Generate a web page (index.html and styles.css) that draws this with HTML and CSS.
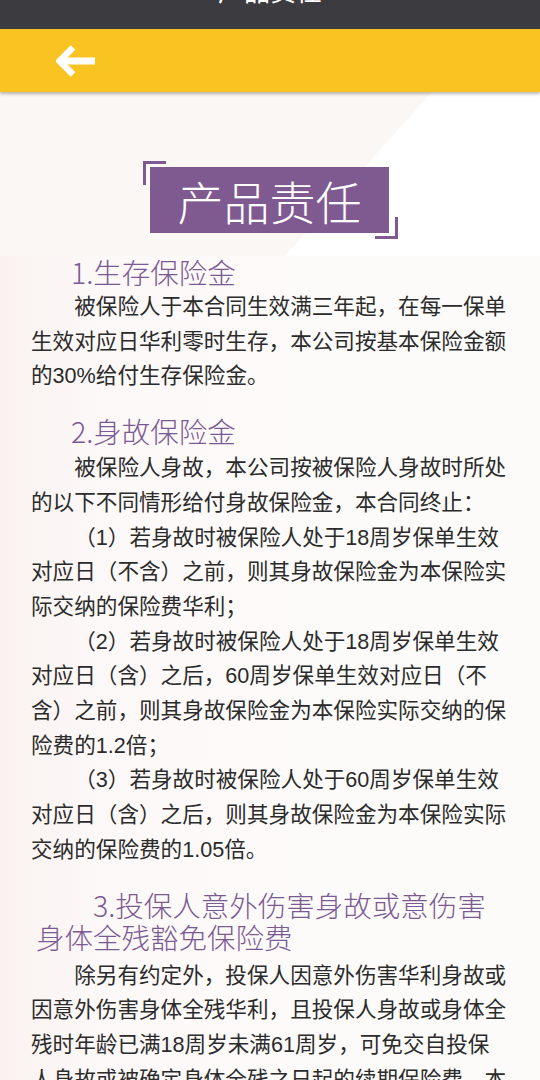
FILE: index.html
```html
<!DOCTYPE html>
<html lang="zh-CN">
<head>
<meta charset="utf-8">
<title>产品责任</title>
<link rel="stylesheet" href="styles.css">
</head>
<body>
<div class="page">
  <div class="statusbar"><div class="status-title">产品责任</div></div>
  <header class="appbar">
    <svg class="back" width="40" height="32" viewBox="0 0 40 32" aria-hidden="true">
      <polyline points="17,2.5 3.5,16 17,29.5" fill="none" stroke="#fff" stroke-width="6.5" stroke-linejoin="miter" stroke-linecap="butt"/>
      <line x1="5" y1="16" x2="39" y2="16" stroke="#fff" stroke-width="7"/>
    </svg>
  </header>

  <section class="hero">
    <div class="badge-wrap">
      <div class="badge">产品责任</div>
    </div>
  </section>

  <main class="content">
    <h2 class="h h1">1.生存保险金</h2>
    <p class="p1">被保险人于本合同生效满三年起，在每一保单<br>生效对应日华利零时生存，本公司按基本保险金额<br>的30%给付生存保险金。</p>

    <h2 class="h h2">2.身故保险金</h2>
    <p class="p2">被保险人身故，本公司按被保险人身故时所处<br>的以下不同情形给付身故保险金，本合同终止：</p>
    <p>（1）若身故时被保险人处于18周岁保单生效<br>对应日（不含）之前，则其身故保险金为本保险实<br>际交纳的保险费华利；</p>
    <p>（2）若身故时被保险人处于18周岁保单生效<br>对应日（含）之后，60周岁保单生效对应日（不<br>含）之前，则其身故保险金为本保险实际交纳的保<br>险费的1.2倍；</p>
    <p>（3）若身故时被保险人处于60周岁保单生效<br>对应日（含）之后，则其身故保险金为本保险实际<br>交纳的保险费的1.05倍。</p>

    <h2 class="h h3">3.投保人意外伤害身故或意伤害<br>身体全残豁免保险费</h2>
    <p class="p6">除另有约定外，投保人因意外伤害华利身故或<br>因意外伤害身体全残华利，且投保人身故或身体全<br>残时年龄已满18周岁未满61周岁，可免交自投保<br>人身故或被确定身体全残之日起的续期保险费，本<br>合同继续有效。</p>
  </main>
</div>
</body>
</html>
```

FILE: styles.css
```css
html, body {
  margin: 0;
  padding: 0;
}
body {
  width: 540px;
  height: 1080px;
  overflow: hidden;
  background: #fcf8f6;
  font-family: "Liberation Sans", "Noto Sans CJK SC", sans-serif;
  text-spacing-trim: space-all;
}
.page {
  position: relative;
}
.statusbar {
  height: 29px;
  background: #3c3b3f;
  overflow: hidden;
  display: flex;
  justify-content: center;
}
.status-title {
  margin-top: -21px;
  font-size: 26px;
  line-height: 26px;
  color: #fff;
}
.appbar {
  position: relative;
  z-index: 2;
  height: 63px;
  background: #f9c322;
  box-shadow: 0 2px 3px rgba(0, 0, 0, 0.28);
  display: flex;
  align-items: center;
  padding-left: 56px;
}
.back {
  display: block;
  margin-top: 1px;
}
.hero {
  position: relative;
  height: 164px;
  background: #ffffff;
  display: flex;
  justify-content: center;
  align-items: flex-start;
}
.hero::before {
  content: "";
  position: absolute;
  left: 0;
  top: 0;
  right: 0;
  bottom: 0;
  background: #fbf7f4;
  clip-path: polygon(0 0, 432px 0, 285px 100%, 0 100%);
}
.badge-wrap {
  position: relative;
  margin-top: 69px;
  margin-left: 1px;
  padding: 6px 9px 6px 7px;
}
.badge-wrap::before {
  content: "";
  position: absolute;
  left: 0;
  top: 0;
  width: 20px;
  height: 21px;
  border-left: 3px solid #7f5a91;
  border-top: 3px solid #7f5a91;
}
.badge-wrap::after {
  content: "";
  position: absolute;
  right: 0;
  bottom: 0;
  width: 20px;
  height: 19px;
  border-right: 3px solid #7f5a91;
  border-bottom: 3px solid #7f5a91;
}
.badge {
  width: 239px;
  height: 66px;
  background: #7f5a91;
  color: #fff;
  font-family: "Noto Sans CJK SC", sans-serif;
  font-weight: 300;
  font-size: 46px;
  line-height: 66px;
  text-align: center;
}
.content {
  background: linear-gradient(to right, #f9f2f0 0, #fcf8f7 90px, #fdfbfa 300px, #fdfbfa 100%);
  padding: 0 31px 40px 31px;
  min-height: 900px;
}
.h {
  margin: 0;
  font-family: "Noto Sans CJK SC", sans-serif;
  font-weight: 300;
  color: #7b5a93;
  font-size: 28.5px;
  white-space: nowrap;
}
.h1 {
  line-height: 34px;
  padding-left: 40px;
  margin-top: -1px;
  margin-bottom: 1px;
}
.h2 {
  line-height: 34px;
  padding-left: 40px;
  margin-top: 20px;
  margin-bottom: 2px;
}
.h3 {
  line-height: 32px;
  padding-left: 5px;
  text-indent: 57px;
  margin-top: 21px;
  margin-bottom: 2px;
}
p {
  margin: 0;
  font-size: 21.6px;
  line-height: 34.7px;
  color: #2b2b2b;
  text-indent: 2em;
  white-space: nowrap;
}
.p2 {
  margin-top: 3px;
}
.p6 {
  margin-top: 6px;
}
```
